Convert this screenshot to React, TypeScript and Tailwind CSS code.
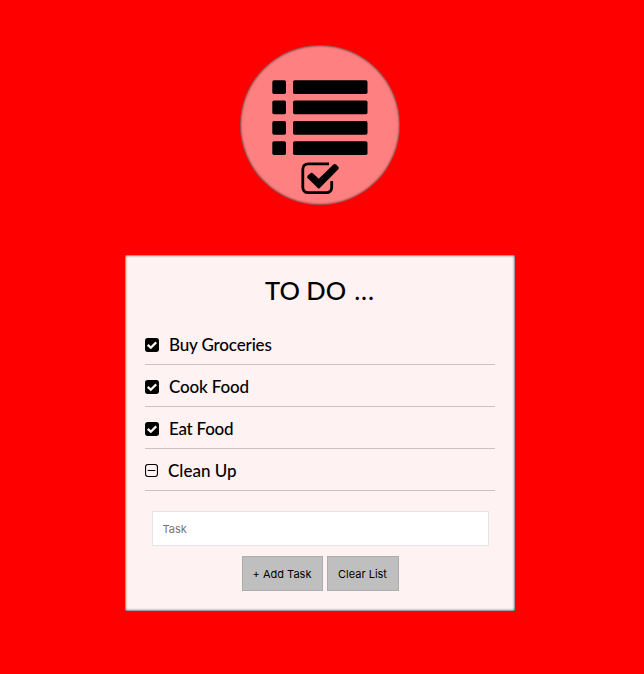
const tasks = [
  { label: 'Buy Groceries', done: true, spacing: 'tracking-[-0.15px]' },
  { label: 'Cook Food', done: true, spacing: 'tracking-[-0.15px]' },
  { label: 'Eat Food', done: true, spacing: 'tracking-[-0.25px]' },
  { label: 'Clean Up', done: false, spacing: 'tracking-[0px]' },
];

function ListIcon() {
  return (
    <svg className="mt-[35px] h-[75px] w-24 shrink-0" viewBox="0 0 96 75" fill="black">
      {[0.2, 20.6, 41, 61.3].map((y) => (
        <g key={y}>
          <rect x="0.3" y={y} width="13.7" height="13.7" rx="1.7" />
          <rect x="21" y={y} width="74.5" height="13.7" rx="1.7" />
        </g>
      ))}
    </svg>
  );
}

function BigCheckIcon() {
  return (
    <svg className="mt-[7px] h-8 w-[38px] shrink-0" viewBox="0 0 38 32" fill="none" stroke="black">
      <path d="M28 1.8H7.5Q1.8 1.8 1.8 7.5V24.9Q1.8 30.6 7.5 30.6H25Q30.7 30.6 30.7 24.9V19" strokeWidth="2.8" />
      <path d="M6.8 13.6L9.4 11.2Q10.6 10.2 11.8 11.2L17.8 16.8L32.4 2.6Q33.8 1.6 35.1 2.6L37.3 4.8Q38.3 6.1 37.3 7.3L18.8 26Q17.8 27 16.8 26L6.8 16.3Q5.6 15 6.8 13.6Z" fill="black" stroke="none" />
    </svg>
  );
}

function CheckedIcon() {
  return (
    <svg className="mt-[3px] h-3.5 w-3.5 shrink-0" viewBox="0 0 14 14">
      <rect width="14" height="14" rx="2.7" fill="black" />
      <path d="M2.7 6.8L5.8 9.7L11.2 4.4" fill="none" stroke="#fff2f2" strokeWidth="2.3" />
    </svg>
  );
}

function MinusIcon() {
  return (
    <svg className="mt-0.5 h-[13px] w-[13px] shrink-0" viewBox="0 0 13 13" fill="none" stroke="black">
      <rect x="0.55" y="0.55" width="11.9" height="11.9" rx="2.4" strokeWidth="1.1" />
      <path d="M2.7 6.5H10.3" strokeWidth="1" />
    </svg>
  );
}

export default function App() {
  return (
    <div className="min-h-screen bg-[#ff0000] text-black">
      <main className="flex w-[640px] flex-col items-center pt-[45px]">
        <div className="flex h-40 w-40 flex-col items-center rounded-full bg-[#ff8080] shadow-[inset_0_0_3px_#000]">
          <ListIcon />
          <BigCheckIcon />
        </div>
        <section className="mt-[50px] h-[356px] w-[390px] bg-[#fff2f2] px-5 shadow-[inset_0_0_3px_#000]">
          <h1 className="flex h-[68px] items-center justify-center gap-2 pt-[2px] font-['Lato',sans-serif] text-[25.5px] font-medium">
            <span className="tracking-[0px]">TO DO</span>
            <span className="tracking-[0.9px]">...</span>
          </h1>
          <ul>
            {tasks.map((task) => (
              <li
                key={task.label}
                className="flex h-[42px] items-center gap-[10px] border-b border-[#ccc2c2] font-['Lato',sans-serif] text-[17px] font-medium"
              >
                {task.done ? <CheckedIcon /> : <MinusIcon />}
                <span className={`pt-[2px] ${task.spacing}`}>{task.label}</span>
              </li>
            ))}
          </ul>
          <form className="mt-5 flex flex-col items-center gap-[10px] font-['Inter',sans-serif] text-[11px]">
            <input
              placeholder="Task"
              className="h-[35px] w-[337px] border border-[#e5e5e5] bg-white px-[10px] outline-none placeholder:text-[#757575]"
            />
            <div className="flex gap-1">
              <button type="button" className="h-[35px] w-[81px] border border-[#adadad] bg-[#bfbfbf] pt-px">
                + Add Task
              </button>
              <button type="button" className="h-[35px] w-[72px] border border-[#adadad] bg-[#bfbfbf] pt-px">
                Clear List
              </button>
            </div>
          </form>
        </section>
      </main>
    </div>
  );
}
